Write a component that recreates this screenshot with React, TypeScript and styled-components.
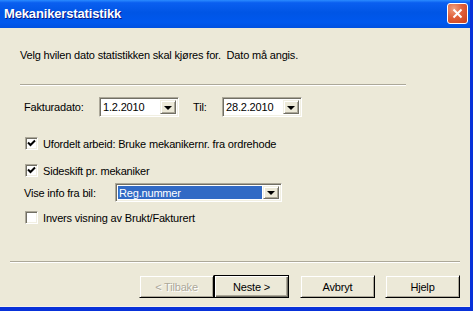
import styled, { createGlobalStyle } from 'styled-components';

const GlobalStyle = createGlobalStyle`
  html, body {
    margin: 0;
    padding: 0;
    background: #ece9d8;
  }
  * {
    box-sizing: border-box;
  }
`;

const Window = styled.div`
  width: 473px;
  height: 311px;
  display: flex;
  flex-direction: column;
  background: #0831d9;
  padding: 0 3px 4px 0;
  font-family: 'Liberation Sans', Arial, sans-serif;
  font-size: 11px;
  letter-spacing: -0.18px;
  color: #000;
`;

const TitleBar = styled.div`
  height: 28px;
  flex: none;
  display: flex;
  align-items: center;
  justify-content: space-between;
  padding: 0 2px 1px 4px;
  background: linear-gradient(
    to bottom,
    #2a8bff 0%,
    #0a5ff0 10%,
    #0055e5 45%,
    #0058ee 80%,
    #0050e0 100%
  );
`;

const Title = styled.span`
  color: #fff;
  font-weight: bold;
  font-size: 13px;
  letter-spacing: -0.15px;
  text-shadow: 1px 1px #0a1883;
`;

const CloseButton = styled.button`
  width: 21px;
  height: 21px;
  padding: 0;
  display: flex;
  align-items: center;
  justify-content: center;
  border: 1px solid #fff;
  border-radius: 3px;
  background: radial-gradient(circle at 30% 25%, #f0a080 0%, #e0603a 45%, #c8401a 100%);
`;

const Body = styled.div`
  flex: 1;
  display: flex;
  flex-direction: column;
  background: #ece9d8;
  border-bottom: 1px solid #f4f2ea;
`;

const Intro = styled.div`
  margin: 21px 0 0 20px;
  line-height: 13px;
  white-space: pre;
`;

const Separator = styled.div<{ $left: number; $right: number; $top?: number; $auto?: boolean }>`
  height: 2px;
  margin-left: ${(p) => p.$left}px;
  margin-right: ${(p) => p.$right}px;
  margin-top: ${(p) => (p.$auto ? 'auto' : `${p.$top ?? 0}px`)};
  border-top: 1px solid #aca899;
  border-bottom: 1px solid #fff;
`;

const Row = styled.div<{ $top: number; $height: number }>`
  display: flex;
  align-items: center;
  height: ${(p) => p.$height}px;
  margin-top: ${(p) => p.$top}px;
  margin-left: 24px;
`;

const Label = styled.span<{ $width?: number; $ml?: number }>`
  width: ${(p) => (p.$width ? `${p.$width}px` : 'auto')};
  margin-left: ${(p) => p.$ml ?? 0}px;
  flex: none;
  white-space: nowrap;
`;

const Combo = styled.div<{ $width: number; $height: number }>`
  width: ${(p) => p.$width}px;
  height: ${(p) => p.$height}px;
  flex: none;
  display: flex;
  background: #fff;
  border-top: 1px solid #aca899;
  border-left: 1px solid #aca899;
  border-right: 1px solid #fff;
  border-bottom: 1px solid #fff;
  box-shadow: inset 1px 1px #716f64, inset -1px -1px #f1efe2;
  padding: 2px;
`;

const ComboText = styled.div<{ $selected?: boolean }>`
  flex: 1;
  display: flex;
  align-items: center;
  padding-left: 1px;
  margin-right: 1px;
  background: ${(p) => (p.$selected ? '#316ac5' : 'transparent')};
  color: ${(p) => (p.$selected ? '#fff' : '#000')};
  white-space: nowrap;
  overflow: hidden;
`;

const DropButton = styled.div`
  width: 16px;
  flex: none;
  display: flex;
  align-items: center;
  justify-content: center;
  background: #ece9d8;
  border-top: 1px solid #f1efe2;
  border-left: 1px solid #f1efe2;
  border-right: 1px solid #716f64;
  border-bottom: 1px solid #716f64;
  box-shadow: inset 1px 1px #fff, inset -1px -1px #aca899;
`;

const Arrow = styled.span`
  width: 0;
  height: 0;
  margin-top: 1px;
  border-left: 4px solid transparent;
  border-right: 4px solid transparent;
  border-top: 4px solid #000;
`;

const CheckBox = styled.span`
  width: 13px;
  height: 13px;
  flex: none;
  display: flex;
  align-items: center;
  justify-content: center;
  background: #fff;
  border-top: 1px solid #aca899;
  border-left: 1px solid #aca899;
  border-right: 1px solid #fff;
  border-bottom: 1px solid #fff;
  box-shadow: inset 1px 1px #716f64, inset -1px -1px #f1efe2;
  margin-left: 1px;
  margin-right: 5px;
`;

const ButtonRow = styled.div`
  display: flex;
  justify-content: flex-end;
  margin: 12px 10px 8px 0;
`;

const Button = styled.button<{ $default?: boolean; $gap?: number }>`
  width: 75px;
  height: 23px;
  padding: 0;
  margin-left: ${(p) => p.$gap ?? 0}px;
  font-family: 'Liberation Sans', Arial, sans-serif;
  font-size: 11px;
  letter-spacing: -0.18px;
  color: #000;
  background: #ece9d8;
  border: 1px solid ${(p) => (p.$default ? '#000' : '#ece9d8')};
  border-right-color: #000;
  border-bottom-color: #000;
  box-shadow: ${(p) =>
    p.$default
      ? 'inset 1px 1px #fff, inset -1px -1px #716f64, inset -2px -2px #aca899'
      : 'inset 1px 1px #fff, inset -1px -1px #aca899'};
  &:disabled {
    color: #aca899;
    text-shadow: 1px 1px #fff;
  }
`;

function Check({ checked }: { checked: boolean }) {
  return (
    <CheckBox>
      {checked && (
        <svg width="9" height="9" viewBox="0 0 9 9">
          <path d="M1 3.5 L3.5 6 L8 1.5" fill="none" stroke="#000" strokeWidth="2" />
        </svg>
      )}
    </CheckBox>
  );
}

export default function App() {
  return (
    <>
      <GlobalStyle />
      <Window>
        <TitleBar>
          <Title>Mekanikerstatistikk</Title>
          <CloseButton aria-label="Lukk">
            <svg width="11" height="11" viewBox="0 0 11 11">
              <path d="M1.5 1.5 L9.5 9.5 M9.5 1.5 L1.5 9.5" stroke="#fff" strokeWidth="2" />
            </svg>
          </CloseButton>
        </TitleBar>
        <Body>
          <Intro>Velg hvilen dato statistikken skal kjøres for.  Dato må angis.</Intro>
          <Separator $left={20} $right={64} $top={22} />

          <Row $top={11} $height={20}>
            <Label $width={75}>Fakturadato:</Label>
            <Combo $width={80} $height={20}>
              <ComboText>1.2.2010</ComboText>
              <DropButton>
                <Arrow />
              </DropButton>
            </Combo>
            <Label $width={29} $ml={14}>Til:</Label>
            <Combo $width={80} $height={20}>
              <ComboText>28.2.2010</ComboText>
              <DropButton>
                <Arrow />
              </DropButton>
            </Combo>
          </Row>

          <Row $top={18} $height={17}>
            <Check checked />
            <Label>Ufordelt arbeid: Bruke mekanikernr. fra ordrehode</Label>
          </Row>
          <Row $top={10} $height={17}>
            <Check checked />
            <Label>Sideskift pr. mekaniker</Label>
          </Row>

          <Row $top={4} $height={19}>
            <Label $width={91}>Vise info fra bil:</Label>
            <Combo $width={167} $height={19}>
              <ComboText $selected>Reg.nummer</ComboText>
              <DropButton>
                <Arrow />
              </DropButton>
            </Combo>
          </Row>

          <Row $top={7} $height={17}>
            <Check checked={false} />
            <Label>Invers visning av Brukt/Fakturert</Label>
          </Row>

          <Separator $left={10} $right={10} $auto />
          <ButtonRow>
            <Button disabled>&lt; Tilbake</Button>
            <Button $default>Neste &gt;</Button>
            <Button $gap={11}>Avbryt</Button>
            <Button $gap={10}>Hjelp</Button>
          </ButtonRow>
        </Body>
      </Window>
    </>
  );
}
